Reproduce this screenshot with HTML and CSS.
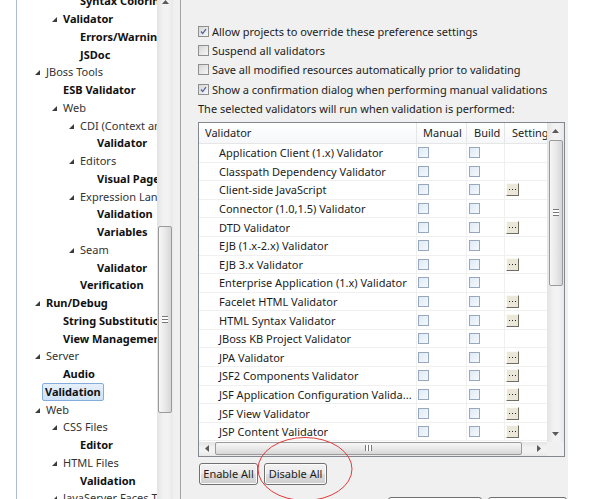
FILE: index.html
```html
<!DOCTYPE html>
<html>
<head>
<meta charset="utf-8">
<link rel="stylesheet" href="styles.css">
</head>
<body>
<div class="app">
  <div class="gutter"></div>
  <div class="tree">
    <div class="tree-list">
      <div class="node l2 b"><span class="tw"></span><span class="lbl">Syntax Coloring</span></div>
      <div class="node l1 b"><span class="tw"><svg class="tri" viewBox="0 0 5 5"><polygon points="5,0 5,5 0,5"/></svg></span><span class="lbl">Validator</span></div>
      <div class="node l2 b"><span class="tw"></span><span class="lbl">Errors/Warnings</span></div>
      <div class="node l2 b"><span class="tw"></span><span class="lbl">JSDoc</span></div>
      <div class="node l0"><span class="tw"><svg class="tri" viewBox="0 0 5 5"><polygon points="5,0 5,5 0,5"/></svg></span><span class="lbl">JBoss Tools</span></div>
      <div class="node l1 b"><span class="tw"></span><span class="lbl">ESB Validator</span></div>
      <div class="node l1"><span class="tw"><svg class="tri" viewBox="0 0 5 5"><polygon points="5,0 5,5 0,5"/></svg></span><span class="lbl">Web</span></div>
      <div class="node l2"><span class="tw"><svg class="tri" viewBox="0 0 5 5"><polygon points="5,0 5,5 0,5"/></svg></span><span class="lbl">CDI (Context and Dependency Injection)</span></div>
      <div class="node l3 b"><span class="tw"></span><span class="lbl">Validator</span></div>
      <div class="node l2"><span class="tw"><svg class="tri" viewBox="0 0 5 5"><polygon points="5,0 5,5 0,5"/></svg></span><span class="lbl">Editors</span></div>
      <div class="node l3 b"><span class="tw"></span><span class="lbl">Visual Page Editor</span></div>
      <div class="node l2"><span class="tw"><svg class="tri" viewBox="0 0 5 5"><polygon points="5,0 5,5 0,5"/></svg></span><span class="lbl">Expression Language</span></div>
      <div class="node l3 b"><span class="tw"></span><span class="lbl">Validation</span></div>
      <div class="node l3 b"><span class="tw"></span><span class="lbl">Variables</span></div>
      <div class="node l2"><span class="tw"><svg class="tri" viewBox="0 0 5 5"><polygon points="5,0 5,5 0,5"/></svg></span><span class="lbl">Seam</span></div>
      <div class="node l3 b"><span class="tw"></span><span class="lbl">Validator</span></div>
      <div class="node l2 b"><span class="tw"></span><span class="lbl">Verification</span></div>
      <div class="node l0 b"><span class="tw"><svg class="tri" viewBox="0 0 5 5"><polygon points="5,0 5,5 0,5"/></svg></span><span class="lbl">Run/Debug</span></div>
      <div class="node l1 b"><span class="tw"></span><span class="lbl">String Substitution</span></div>
      <div class="node l1 b"><span class="tw"></span><span class="lbl">View Management</span></div>
      <div class="node l0"><span class="tw"><svg class="tri" viewBox="0 0 5 5"><polygon points="5,0 5,5 0,5"/></svg></span><span class="lbl">Server</span></div>
      <div class="node l1 b"><span class="tw"></span><span class="lbl">Audio</span></div>
      <div class="node l0 b"><span class="tw"></span><span class="lbl sel">Validation</span></div>
      <div class="node l0"><span class="tw"><svg class="tri" viewBox="0 0 5 5"><polygon points="5,0 5,5 0,5"/></svg></span><span class="lbl">Web</span></div>
      <div class="node l1"><span class="tw"><svg class="tri" viewBox="0 0 5 5"><polygon points="5,0 5,5 0,5"/></svg></span><span class="lbl">CSS Files</span></div>
      <div class="node l2 b"><span class="tw"></span><span class="lbl">Editor</span></div>
      <div class="node l1"><span class="tw"><svg class="tri" viewBox="0 0 5 5"><polygon points="5,0 5,5 0,5"/></svg></span><span class="lbl">HTML Files</span></div>
      <div class="node l2 b"><span class="tw"></span><span class="lbl">Validation</span></div>
      <div class="node l1"><span class="tw"><svg class="tri" viewBox="0 0 5 5"><polygon points="5,0 5,5 0,5"/></svg></span><span class="lbl">JavaServer Faces Tools</span></div>
    </div>
  </div>
  <div class="tree-sb">
    <div class="sb-top"><svg width="7" height="4" viewBox="0 0 7 4"><polygon points="0,4 3.5,0 7,4" fill="#5a5a5a"/></svg></div>
    <div class="vthumb tthumb"><span class="vgrip"></span></div>
  </div>
  <div class="splitter"></div>
  <div class="main">
    <div class="opts">
      <div class="opt"><span class="cb"><svg viewBox="0 0 11 11"><path d="M2.5 5.5 L4.5 8 L8.5 2.5" fill="none" stroke="#4a5ea0" stroke-width="1.5"/></svg></span><span>Allow projects to override these preference settings</span></div>
      <div class="opt"><span class="cb"></span><span>Suspend all validators</span></div>
      <div class="opt"><span class="cb"></span><span>Save all modified resources automatically prior to validating</span></div>
      <div class="opt"><span class="cb"><svg viewBox="0 0 11 11"><path d="M2.5 5.5 L4.5 8 L8.5 2.5" fill="none" stroke="#4a5ea0" stroke-width="1.5"/></svg></span><span>Show a confirmation dialog when performing manual validations</span></div>
      <div class="opt"><span>The selected validators will run when validation is performed:</span></div>
    </div>
    <div class="table">
      <div class="content">
        <div class="hdr">
          <div class="hc">Validator</div>
          <div class="hc">Manual</div>
          <div class="hc">Build</div>
          <div class="hc">Settings</div>
        </div>
        <div class="row"><div class="c name">Application Client (1.x) Validator</div><div class="c m"><span class="tcb"></span></div><div class="c bd"><span class="tcb"></span></div><div class="c s"></div></div>
        <div class="row"><div class="c name">Classpath Dependency Validator</div><div class="c m"><span class="tcb"></span></div><div class="c bd"><span class="tcb"></span></div><div class="c s"></div></div>
        <div class="row"><div class="c name">Client-side JavaScript</div><div class="c m"><span class="tcb"></span></div><div class="c bd"><span class="tcb"></span></div><div class="c s"><span class="dots"><svg width="7" height="1" viewBox="0 0 7 1"><rect x="0" y="0" width="1" height="1"/><rect x="3" y="0" width="1" height="1"/><rect x="6" y="0" width="1" height="1"/></svg></span></div></div>
        <div class="row"><div class="c name">Connector (1.0,1.5) Validator</div><div class="c m"><span class="tcb"></span></div><div class="c bd"><span class="tcb"></span></div><div class="c s"></div></div>
        <div class="row"><div class="c name">DTD Validator</div><div class="c m"><span class="tcb"></span></div><div class="c bd"><span class="tcb"></span></div><div class="c s"><span class="dots"><svg width="7" height="1" viewBox="0 0 7 1"><rect x="0" y="0" width="1" height="1"/><rect x="3" y="0" width="1" height="1"/><rect x="6" y="0" width="1" height="1"/></svg></span></div></div>
        <div class="row"><div class="c name">EJB (1.x-2.x) Validator</div><div class="c m"><span class="tcb"></span></div><div class="c bd"><span class="tcb"></span></div><div class="c s"></div></div>
        <div class="row"><div class="c name">EJB 3.x Validator</div><div class="c m"><span class="tcb"></span></div><div class="c bd"><span class="tcb"></span></div><div class="c s"><span class="dots"><svg width="7" height="1" viewBox="0 0 7 1"><rect x="0" y="0" width="1" height="1"/><rect x="3" y="0" width="1" height="1"/><rect x="6" y="0" width="1" height="1"/></svg></span></div></div>
        <div class="row"><div class="c name">Enterprise Application (1.x) Validator</div><div class="c m"><span class="tcb"></span></div><div class="c bd"><span class="tcb"></span></div><div class="c s"></div></div>
        <div class="row"><div class="c name">Facelet HTML Validator</div><div class="c m"><span class="tcb"></span></div><div class="c bd"><span class="tcb"></span></div><div class="c s"><span class="dots"><svg width="7" height="1" viewBox="0 0 7 1"><rect x="0" y="0" width="1" height="1"/><rect x="3" y="0" width="1" height="1"/><rect x="6" y="0" width="1" height="1"/></svg></span></div></div>
        <div class="row"><div class="c name">HTML Syntax Validator</div><div class="c m"><span class="tcb"></span></div><div class="c bd"><span class="tcb"></span></div><div class="c s"><span class="dots"><svg width="7" height="1" viewBox="0 0 7 1"><rect x="0" y="0" width="1" height="1"/><rect x="3" y="0" width="1" height="1"/><rect x="6" y="0" width="1" height="1"/></svg></span></div></div>
        <div class="row"><div class="c name">JBoss KB Project Validator</div><div class="c m"><span class="tcb"></span></div><div class="c bd"><span class="tcb"></span></div><div class="c s"></div></div>
        <div class="row"><div class="c name">JPA Validator</div><div class="c m"><span class="tcb"></span></div><div class="c bd"><span class="tcb"></span></div><div class="c s"><span class="dots"><svg width="7" height="1" viewBox="0 0 7 1"><rect x="0" y="0" width="1" height="1"/><rect x="3" y="0" width="1" height="1"/><rect x="6" y="0" width="1" height="1"/></svg></span></div></div>
        <div class="row"><div class="c name">JSF2 Components Validator</div><div class="c m"><span class="tcb"></span></div><div class="c bd"><span class="tcb"></span></div><div class="c s"><span class="dots"><svg width="7" height="1" viewBox="0 0 7 1"><rect x="0" y="0" width="1" height="1"/><rect x="3" y="0" width="1" height="1"/><rect x="6" y="0" width="1" height="1"/></svg></span></div></div>
        <div class="row"><div class="c name">JSF Application Configuration Valida...</div><div class="c m"><span class="tcb"></span></div><div class="c bd"><span class="tcb"></span></div><div class="c s"><span class="dots"><svg width="7" height="1" viewBox="0 0 7 1"><rect x="0" y="0" width="1" height="1"/><rect x="3" y="0" width="1" height="1"/><rect x="6" y="0" width="1" height="1"/></svg></span></div></div>
        <div class="row"><div class="c name">JSF View Validator</div><div class="c m"><span class="tcb"></span></div><div class="c bd"><span class="tcb"></span></div><div class="c s"><span class="dots"><svg width="7" height="1" viewBox="0 0 7 1"><rect x="0" y="0" width="1" height="1"/><rect x="3" y="0" width="1" height="1"/><rect x="6" y="0" width="1" height="1"/></svg></span></div></div>
        <div class="row"><div class="c name">JSP Content Validator</div><div class="c m"><span class="tcb"></span></div><div class="c bd"><span class="tcb"></span></div><div class="c s"><span class="dots"><svg width="7" height="1" viewBox="0 0 7 1"><rect x="0" y="0" width="1" height="1"/><rect x="3" y="0" width="1" height="1"/><rect x="6" y="0" width="1" height="1"/></svg></span></div></div>
      </div>
      <div class="vsb">
        <div class="sbtn"><svg width="7" height="4" viewBox="0 0 7 4"><polygon points="0,4 3.5,0 7,4" fill="#5a5a5a"/></svg></div>
        <div class="vthumb tbl"><span class="vgrip"></span></div>
        <div class="track"></div>
        <div class="sbtn"><svg width="7" height="4" viewBox="0 0 7 4"><polygon points="0,0 3.5,4 7,0" fill="#5a5a5a"/></svg></div>
      </div>
      <div class="hsb">
        <div class="hbtn"><svg width="4" height="7" viewBox="0 0 4 7"><polygon points="4,0 0,3.5 4,7" fill="#5a5a5a"/></svg></div>
        <div class="hthumb"><span class="hgrip"></span></div>
        <div class="track"></div>
        <div class="hbtn"><svg width="4" height="7" viewBox="0 0 4 7"><polygon points="0,0 4,3.5 0,7" fill="#5a5a5a"/></svg></div>
      </div>
      <div class="corner"></div>
    </div>
    <div class="btnrow">
      <button class="btn w1">Enable All</button>
      <button class="btn w2">Disable All</button>
    </div>
    <div class="dlgbtns">
      <button class="btn w3">Restore Defaults</button>
      <button class="btn w4">Apply</button>
    </div>
  </div>
  <div class="outside"></div>
</div>
<svg class="annot" width="98" height="70" viewBox="0 0 98 70"><ellipse cx="48" cy="33" rx="47" ry="31.5" fill="none" stroke="#e23a3a" stroke-width="1"/></svg>
</body>
</html>
```
FILE: styles.css
```css
html, body {
  margin: 0;
  padding: 0;
}
body {
  width: 592px;
  height: 499px;
  overflow: hidden;
  position: relative;
  background: #fff;
  font-family: "Noto Sans", "Liberation Sans", sans-serif;
  font-size: 11px;
  color: #1c1c1c;
}
.app {
  display: flex;
  height: 499px;
  overflow: hidden;
}
.gutter {
  width: 16px;
  flex: none;
  background: #fff;
  border-right: 1px solid #aebbd0;
}
.tree {
  width: 140px;
  flex: none;
  overflow: hidden;
  background: #fff;
}
.tree-list {
  margin-top: -7.6px;
}
.node {
  height: 17.75px;
  display: flex;
  align-items: center;
  white-space: nowrap;
  color: #333;
}
.node.b {
  font-weight: 700;
  color: #111;
}
.l0 { padding-left: 18px; }
.l1 { padding-left: 35px; }
.l2 { padding-left: 52px; }
.l3 { padding-left: 69px; }
.tw {
  width: 11px;
  flex: none;
  display: flex;
  align-items: center;
}
.tri {
  width: 5px;
  height: 5px;
  fill: #3c3c3c;
  margin-top: 1px;
}
.lbl {
  line-height: 16px;
}
.lbl.sel {
  margin-left: -4px;
  padding: 0 2px;
  border: 1px solid #84acdd;
  border-radius: 2px;
  background: linear-gradient(#e6f0fb, #cfe2f7);
}
.tree-sb {
  width: 16px;
  flex: none;
  background: linear-gradient(90deg, #e3e3e3, #f2f2f2 40%, #f2f2f2 70%, #e8e8e8);
  display: flex;
  flex-direction: column;
  align-items: center;
}
.sb-top {
  height: 4px;
  display: flex;
  align-items: flex-end;
}
.vthumb {
  box-sizing: border-box;
  width: 14px;
  border: 1px solid #9a9a9a;
  border-radius: 2px;
  background: linear-gradient(90deg, #f6f6f6, #e9e9e9 50%, #d6d6d6);
  display: flex;
  align-items: center;
  justify-content: center;
  flex: none;
}
.tthumb {
  margin-top: 222px;
  height: 187px;
}
.vgrip {
  width: 6px;
  height: 7px;
  box-sizing: border-box;
  background: linear-gradient(#777 0 1px, #fff 1px 3px, #777 3px 4px, #fff 4px 6px, #777 6px 7px);
}
.splitter {
  width: 7px;
  flex: none;
  background: #f0f0f0;
  border-right: 1px solid #a3a3a3;
}
.main {
  width: 387px;
  flex: none;
  box-sizing: border-box;
  background: #f0f0f0;
  padding: 22px 1px 0 17px;
  overflow: hidden;
}
.outside {
  flex: 1;
  background: #fff;
}
.opt {
  height: 19.2px;
  display: flex;
  align-items: center;
  gap: 3px;
  white-space: nowrap;
}
.cb {
  width: 11px;
  height: 11px;
  box-sizing: border-box;
  border: 1px solid #8e8f8f;
  background: linear-gradient(135deg, #d6d6d6, #f7f7f7);
  flex: none;
  display: flex;
}
.cb svg {
  width: 9px;
  height: 9px;
}
.table {
  margin-top: 4px;
  width: 367px;
  height: 335px;
  box-sizing: border-box;
  border: 1px solid #828790;
  background: #fff;
  display: grid;
  grid-template-columns: 348px 17px;
  grid-template-rows: 319px 14px;
}
.content {
  overflow: hidden;
}
.hdr, .row {
  display: grid;
  grid-template-columns: 218px 50px 38px 42px;
}
.hdr {
  height: 21px;
  background: linear-gradient(#ffffff, #f6f7f9);
  border-bottom: 1px solid #e6e6e6;
  box-sizing: border-box;
}
.hc {
  display: flex;
  align-items: center;
  padding-left: 6px;
  border-right: 1px solid #e3e5e8;
  white-space: nowrap;
  overflow: hidden;
}
.hc:nth-child(3), .hc:nth-child(4) { padding-left: 7px; }
.hc:nth-child(4) { border-right: none; }
.row {
  height: 18.6px;
}
.c {
  border-right: 1px solid #f0f0f0;
  border-bottom: 1px solid #f0f0f0;
  display: flex;
  align-items: center;
  white-space: nowrap;
  overflow: hidden;
}
.c.name { padding-left: 20px; }
.c.m { padding-left: 1px; }
.c.bd { padding-left: 2px; }
.c.s { padding-left: 1px; border-right: none; }
.tcb {
  width: 11px;
  height: 11px;
  box-sizing: border-box;
  border: 1px solid #97a8bd;
  background: linear-gradient(135deg, #dfeaf6, #f4f8fc);
}
.dots {
  width: 13px;
  height: 13px;
  box-sizing: border-box;
  border-top: 1px solid #fbfaf5;
  border-left: 1px solid #fbfaf5;
  border-right: 1px solid #6e6c63;
  border-bottom: 1px solid #6e6c63;
  background: #ebe8da;
  display: flex;
  align-items: center;
  justify-content: center;
  fill: #222;
}
.vsb {
  display: flex;
  flex-direction: column;
  align-items: center;
  background: linear-gradient(90deg, #e4e4e4, #f2f2f2 40%, #f2f2f2 70%, #e8e8e8);
}
.sbtn {
  height: 16px;
  flex: none;
  display: flex;
  align-items: center;
  justify-content: center;
}
.vthumb.tbl {
  margin-top: 1px;
  height: 146px;
}
.track { flex: 1; }
.hsb {
  display: flex;
  background: linear-gradient(#e4e4e4, #f2f2f2 40%, #f2f2f2 70%, #e8e8e8);
}
.hbtn {
  width: 16px;
  flex: none;
  display: flex;
  align-items: center;
  justify-content: center;
}
.hthumb {
  width: 307px;
  box-sizing: border-box;
  border: 1px solid #9a9a9a;
  border-radius: 2px;
  background: linear-gradient(#f6f6f6, #e9e9e9 50%, #d6d6d6);
  display: flex;
  align-items: center;
  justify-content: center;
  margin: 0 0 1px;
}
.hgrip {
  width: 7px;
  height: 6px;
  background: linear-gradient(90deg, #777 0 1px, #fff 1px 3px, #777 3px 4px, #fff 4px 6px, #777 6px 7px);
}
.corner {
  background: #f0f0f0;
}
.btnrow {
  display: flex;
  gap: 6px;
  margin-top: 6px;
  padding-left: 1px;
}
.btn {
  font-family: "Noto Sans", "Liberation Sans", sans-serif;
  font-size: 11px;
  color: #1c1c1c;
  height: 22px;
  box-sizing: border-box;
  border: 1px solid #707070;
  border-radius: 3px;
  background: linear-gradient(#f2f2f2 0%, #ebebeb 50%, #dddddd 51%, #cfcfcf 100%);
  padding: 0;
  margin: 0;
  box-shadow: inset 0 0 0 1px #fcfcfc;
  flex: none;
}
.w1 { width: 59px; }
.w2 { width: 63px; }
.w3 { width: 94px; }
.w4 { width: 79px; }
.dlgbtns {
  display: flex;
  justify-content: flex-end;
  gap: 6px;
  margin-top: 12px;
}
.annot {
  position: absolute;
  left: 257px;
  top: 436px;
}
```
